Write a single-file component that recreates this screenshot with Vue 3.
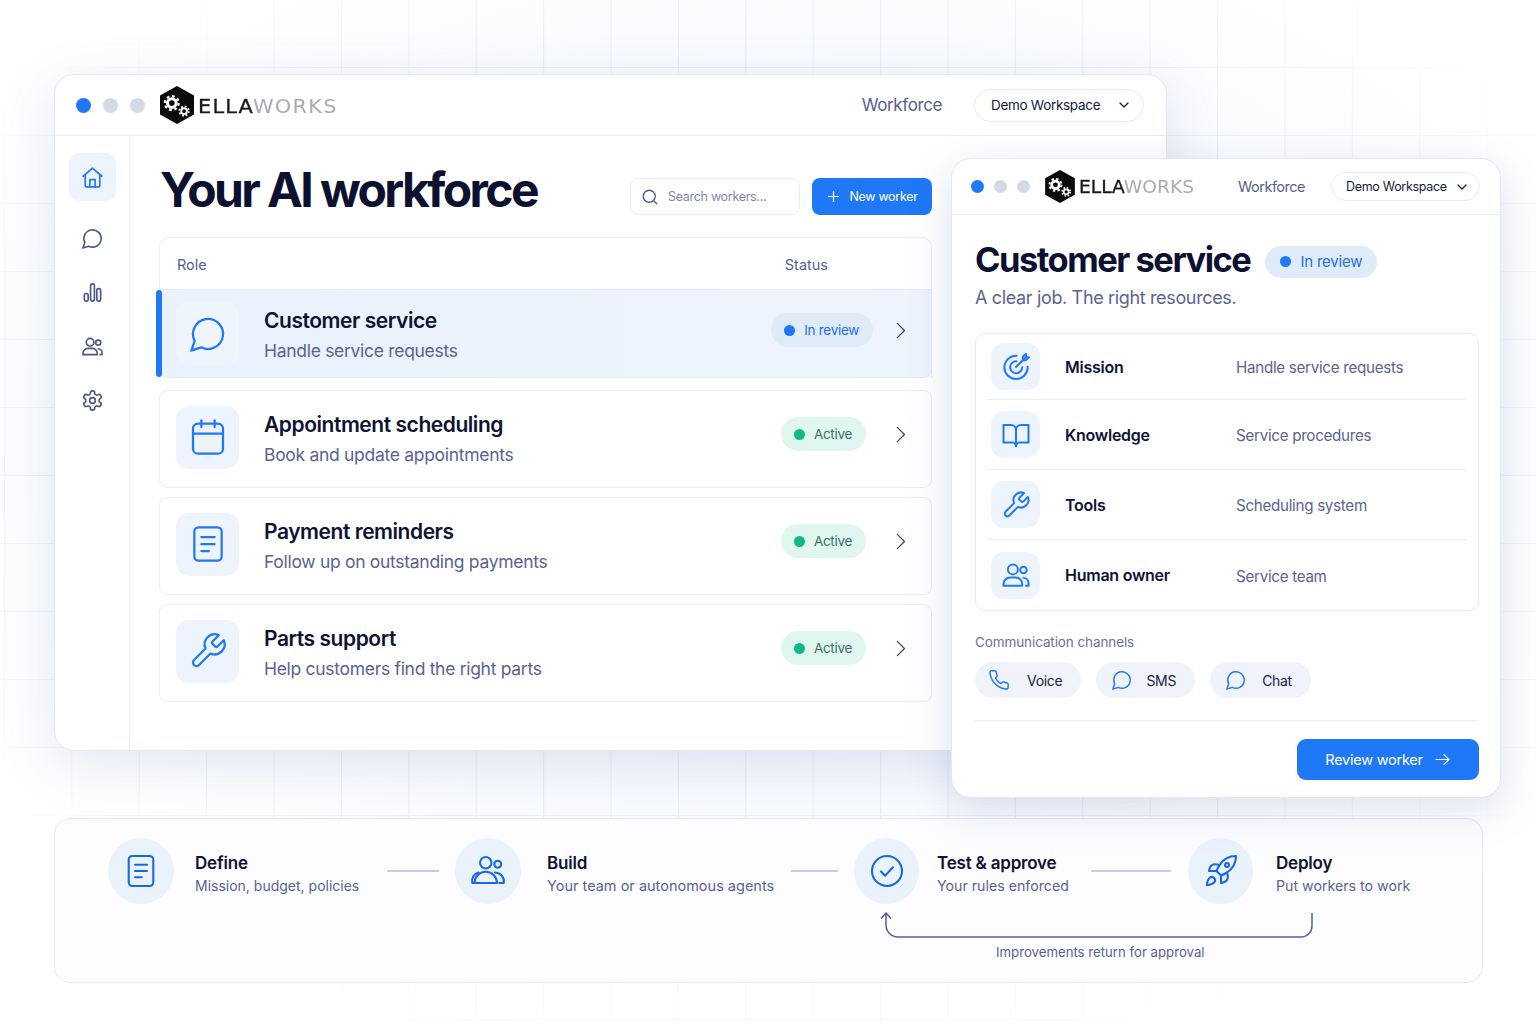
<script setup>
const icons = {
  home: '<path d="M3 10.8 12 3l9 7.800"/><path d="M5 9.200V20a1 1 0 0 0 1 1h12a1 1 0 0 0 1-1V9.200"/><path d="M9.500 21v-7h5v7"/>',
  chat: '<path d="M7.900 20A9 9 0 1 0 4 16.100L2 22Z"/>',
  bars: '<rect x="3.500" y="13" width="4" height="8" rx="1.700"/><rect x="10" y="3" width="4" height="18" rx="1.700"/><rect x="16.500" y="8" width="4" height="13" rx="1.700"/>',
  users: '<circle cx="9.500" cy="7.500" r="4"/><circle cx="18" cy="8" r="2.600"/><path d="M2 20.500v-1.200A5.300 5.300 0 0 1 7.300 14h4.400a5.300 5.300 0 0 1 5.300 5.300v1.200z"/><path d="M18 14.300a4.200 4.200 0 0 1 4 4.200v2h-2"/>',
  build: '<circle cx="10.500" cy="6.500" r="3.800"/><circle cx="18.500" cy="7.500" r="2.300"/><path d="M3 20a7.500 7.500 0 0 1 15 0z"/><path d="M16.500 13a6 6 0 0 1 6 7h-3"/><path d="M5.500 13a6 6 0 0 0-4 7h2"/>',
  gear: '<path d="M12.220 2h-.44a2 2 0 0 0-2 2v.18a2 2 0 0 1-1 1.730l-.43.25a2 2 0 0 1-2 0l-.15-.08a2 2 0 0 0-2.730.73l-.22.38a2 2 0 0 0 .73 2.730l.15.1a2 2 0 0 1 1 1.720v.51a2 2 0 0 1-1 1.740l-.15.09a2 2 0 0 0-.73 2.730l.22.38a2 2 0 0 0 2.730.73l.15-.08a2 2 0 0 1 2 0l.43.25a2 2 0 0 1 1 1.730V20a2 2 0 0 0 2 2h.44a2 2 0 0 0 2-2v-.18a2 2 0 0 1 1-1.730l.43-.25a2 2 0 0 1 2 0l.15.08a2 2 0 0 0 2.730-.73l.22-.39a2 2 0 0 0-.73-2.730l-.15-.08a2 2 0 0 1-1-1.740v-.5a2 2 0 0 1 1-1.740l.15-.09a2 2 0 0 0 .73-2.730l-.22-.38a2 2 0 0 0-2.730-.73l-.15.08a2 2 0 0 1-2 0l-.43-.25a2 2 0 0 1-1-1.730V4a2 2 0 0 0-2-2z"/><circle cx="12" cy="12" r="3"/>',
  calendar: '<path d="M8 2v4"/><path d="M16 2v4"/><rect x="3" y="4" width="18" height="18" rx="3"/><path d="M3 10h18"/>',
  doc: '<rect x="3.800" y="2" width="16.400" height="20" rx="2.500"/><path d="M8 7.800h8"/><path d="M8 12h8"/><path d="M8 16.200h4.500"/>',
  wrench: '<path d="M14.700 6.300a1 1 0 0 0 0 1.400l1.600 1.600a1 1 0 0 0 1.400 0l3.770-3.770a6 6 0 0 1-7.940 7.940l-6.910 6.910a2.120 2.120 0 0 1-3-3l6.910-6.910a6 6 0 0 1 7.940-7.940l-3.760 3.760z"/>',
  target: '<path d="M12.500 3a9.300 9.300 0 1 0 8.800 8.800"/><path d="M12.300 7.400a4.800 4.800 0 1 0 4.600 4.800"/><path d="M12 12l8-8"/><path d="M17.500 6.500V3.600L20 1.500v2.600h2.500L20 6.500z"/>',
  book: '<path d="M2 4h6a4 4 0 0 1 4 4v13a3 3 0 0 0-3-3H2z"/><path d="M22 4h-6a4 4 0 0 0-4 4v13a3 3 0 0 1 3-3h7z"/>',
  phone: '<path d="M22 16.920v3a2 2 0 0 1-2.180 2 19.790 19.790 0 0 1-8.630-3.070 19.500 19.500 0 0 1-6-6 19.790 19.790 0 0 1-3.070-8.670A2 2 0 0 1 4.110 2h3a2 2 0 0 1 2 1.720 12.840 12.840 0 0 0 .7 2.810 2 2 0 0 1-.45 2.110L8.090 9.910a16 16 0 0 0 6 6l1.270-1.270a2 2 0 0 1 2.110-.45 12.840 12.840 0 0 0 2.810.7A2 2 0 0 1 22 16.920z"/>',
  check: '<circle cx="12" cy="12" r="10"/><path d="m8 12.300 2.800 2.800 5.200-5.600"/>',
  rocket: '<path d="M4.500 16.500c-1.500 1.260-2 5-2 5s3.740-.5 5-2c.71-.84.7-2.130-.09-2.910a2.180 2.180 0 0 0-2.910-.09z"/><path d="m12 15-3-3a22 22 0 0 1 2-3.950A12.880 12.880 0 0 1 22 2c0 2.720-.78 7.500-6 11a22.350 22.350 0 0 1-4 2z"/><path d="M9 12H4s.55-3.030 2-4c1.620-1.080 5 0 5 0"/><path d="M12 15v5s3.030-.55 4-2c1.080-1.620 0-5 0-5"/><circle cx="16" cy="8" r="1.300"/>',
  search: '<circle cx="11" cy="11" r="8"/><path d="m21 21-4.300-4.300"/>',
  plus: '<path d="M12 4v16"/><path d="M4 12h16"/>',
  right: '<path d="m8 3 9 9-9 9"/>',
  down: '<path d="m6 9 6 6 6-6"/>',
  arrow: '<path d="M3 12h18"/><path d="m14 5 7 7-7 7"/>'
}
const nav = ['home', 'chat', 'bars', 'users', 'gear']
const workers = [
  { icon: 'calendar', title: 'Appointment scheduling', sub: 'Book and update appointments' },
  { icon: 'doc', title: 'Payment reminders', sub: 'Follow up on outstanding payments' },
  { icon: 'wrench', title: 'Parts support', sub: 'Help customers find the right parts' }
]
const facts = [
  { icon: 'target', label: 'Mission', value: 'Handle service requests' },
  { icon: 'book', label: 'Knowledge', value: 'Service procedures' },
  { icon: 'wrench', label: 'Tools', value: 'Scheduling system' },
  { icon: 'users', label: 'Human owner', value: 'Service team' }
]
const channels = [
  { icon: 'phone', label: 'Voice' },
  { icon: 'chat', label: 'SMS' },
  { icon: 'chat', label: 'Chat' }
]
</script>

<template>
  <div class="page">
    <section class="window main">
      <header class="bar">
        <div class="dots"><i class="blue"></i><i></i><i></i></div>
        <div class="logo">
          <svg class="hex" viewBox="0 0 36 40">
            <polygon points="18,0 36,10 36,30 18,40 0,30 0,10" fill="#0b0b0d" />
            <circle cx="12.500" cy="18" r="4.600" fill="none" stroke="#fff" stroke-width="3.200" />
            <circle cx="12.500" cy="18" r="7.300" fill="none" stroke="#fff" stroke-width="2.400" stroke-dasharray="2.900 2.830" />
            <circle cx="25.500" cy="26.500" r="3" fill="none" stroke="#fff" stroke-width="2" />
            <circle cx="25.500" cy="26.500" r="5" fill="none" stroke="#fff" stroke-width="1.900" stroke-dasharray="2 1.930" />
          </svg>
          <span class="word"><b>ELLA</b><em>WORKS</em></span>
        </div>
        <span class="crumb">Workforce</span>
        <button class="select">Demo Workspace <svg class="ic chev" viewBox="0 0 24 24" v-html="icons.down"></svg></button>
      </header>
      <div class="main-body">
        <nav class="side">
          <span v-for="(n, i) in nav" :key="n" class="nav-item" :class="{ on: i === 0 }">
            <svg class="ic" viewBox="0 0 24 24" v-html="icons[n]"></svg>
          </span>
        </nav>
        <div class="content">
          <div class="head">
            <h1>Your AI workforce</h1>
            <label class="search"><svg class="ic" viewBox="0 0 24 24" v-html="icons.search"></svg>Search workers...</label>
            <button class="new"><svg class="ic" viewBox="0 0 24 24" v-html="icons.plus"></svg>New worker</button>
          </div>
          <div class="table">
            <div class="thead"><span>Role</span><span>Status</span></div>
            <div class="row selected">
              <span class="tile"><svg class="ic" viewBox="0 0 24 24" v-html="icons.chat"></svg></span>
              <div class="row-text"><h3>Customer service</h3><p>Handle service requests</p></div>
              <span class="pill review"><i></i>In review</span>
              <svg class="ic go" viewBox="0 0 24 24" v-html="icons.right"></svg>
            </div>
          </div>
          <div class="rows">
            <div v-for="w in workers" :key="w.title" class="row">
              <span class="tile"><svg class="ic" viewBox="0 0 24 24" v-html="icons[w.icon]"></svg></span>
              <div class="row-text"><h3>{{ w.title }}</h3><p>{{ w.sub }}</p></div>
              <span class="pill active"><i></i>Active</span>
              <svg class="ic go" viewBox="0 0 24 24" v-html="icons.right"></svg>
            </div>
          </div>
        </div>
      </div>
    </section>

    <section class="window detail">
      <header class="bar small">
        <div class="dots"><i class="blue"></i><i></i><i></i></div>
        <div class="logo">
          <svg class="hex" viewBox="0 0 36 40">
            <polygon points="18,0 36,10 36,30 18,40 0,30 0,10" fill="#0b0b0d" />
            <circle cx="12.500" cy="18" r="4.600" fill="none" stroke="#fff" stroke-width="3.200" />
            <circle cx="12.500" cy="18" r="7.300" fill="none" stroke="#fff" stroke-width="2.400" stroke-dasharray="2.900 2.830" />
            <circle cx="25.500" cy="26.500" r="3" fill="none" stroke="#fff" stroke-width="2" />
            <circle cx="25.500" cy="26.500" r="5" fill="none" stroke="#fff" stroke-width="1.900" stroke-dasharray="2 1.930" />
          </svg>
          <span class="word"><b>ELLA</b><em>WORKS</em></span>
        </div>
        <span class="crumb">Workforce</span>
        <button class="select">Demo Workspace <svg class="ic chev" viewBox="0 0 24 24" v-html="icons.down"></svg></button>
      </header>
      <div class="detail-body">
        <div class="detail-title"><h2>Customer service</h2><span class="pill review big"><i></i>In review</span></div>
        <p class="lead">A clear job. The right resources.</p>
        <div class="facts">
          <div v-for="f in facts" :key="f.label" class="fact">
            <span class="tile small"><svg class="ic" viewBox="0 0 24 24" v-html="icons[f.icon]"></svg></span>
            <strong>{{ f.label }}</strong>
            <span class="value">{{ f.value }}</span>
          </div>
        </div>
        <h4>Communication channels</h4>
        <div class="chips">
          <span v-for="c in channels" :key="c.label" class="chip"><svg class="ic" viewBox="0 0 24 24" v-html="icons[c.icon]"></svg>{{ c.label }}</span>
        </div>
        <div class="foot">
          <button class="review-btn">Review worker <svg class="ic" viewBox="0 0 24 24" v-html="icons.arrow"></svg></button>
        </div>
      </div>
    </section>

    <section class="flow">
      <div class="step s1">
        <span class="disc"><svg class="ic" viewBox="0 0 24 24" v-html="icons.doc"></svg></span>
        <div><h5>Define</h5><p>Mission, budget, policies</p></div>
      </div>
      <span class="line l1"></span>
      <div class="step s2">
        <span class="disc"><svg class="ic" viewBox="0 0 24 24" v-html="icons.build"></svg></span>
        <div><h5>Build</h5><p>Your team or autonomous agents</p></div>
      </div>
      <span class="line l2"></span>
      <div class="step s3">
        <span class="disc"><svg class="ic" viewBox="0 0 24 24" v-html="icons.check"></svg></span>
        <div><h5>Test &amp; approve</h5><p>Your rules enforced</p></div>
      </div>
      <span class="line l3"></span>
      <div class="step s4">
        <span class="disc"><svg class="ic" viewBox="0 0 24 24" v-html="icons.rocket"></svg></span>
        <div><h5>Deploy</h5><p>Put workers to work</p></div>
      </div>
      <svg class="loop" viewBox="0 0 440 34" fill="none">
        <path d="M432 1v13a11 11 0 0 1-11 11H18A12 12 0 0 1 6 13V1" stroke="#56608f" stroke-width="1.500" />
        <path d="M1 6.500 6 1l5 5.500" stroke="#56608f" stroke-width="1.500" />
      </svg>
      <span class="loop-label">Improvements return for approval</span>
    </section>
  </div>
</template>

<style>
html, body { margin: 0; background: #fff; }
</style>

<style scoped>
* { box-sizing: border-box; }
.page {
  position: relative;
  width: 1536px;
  height: 1024px;
  overflow: hidden;
  padding: 74px 0 0 54px;
  font-family: Inter, "Noto Sans", sans-serif;
  color: #0d1333;
  background: radial-gradient(ellipse 1000px 640px at 50% 42%, rgba(222, 232, 250, .6), rgba(255, 255, 255, 0) 85%), #fff;
}
.page::before {
  content: "";
  position: absolute;
  inset: 0;
  background:
    linear-gradient(#e8edf7 1px, transparent 1px) 0 67px / 100% 68px,
    linear-gradient(90deg, #e8edf7 1px, transparent 1px) 4px 0 / 67.400px 100%;
  -webkit-mask-image: radial-gradient(ellipse 950px 640px at 50% 45%, #000 65%, transparent 100%);
  mask-image: radial-gradient(ellipse 950px 640px at 50% 45%, #000 65%, transparent 100%);
}
h1, h2, h3, h4, h5, p { margin: 0; }
button { font-family: inherit; border: 0; }
.ic { fill: none; stroke: currentColor; stroke-width: 1.900; stroke-linecap: round; stroke-linejoin: round; display: block; flex: none; }

.window {
  position: relative;
  background: #fff;
  border: 1px solid #e3e8f3;
  border-radius: 20px;
  box-shadow: 0 14px 56px rgba(72, 104, 170, .16);
}
.main { width: 1113px; height: 677px; overflow: clip; }
.detail { position: absolute; left: 951px; top: 158px; width: 550px; height: 640px; z-index: 2; box-shadow: 0 12px 44px rgba(68, 96, 160, .18); }

.bar { height: 61px; display: flex; align-items: center; padding: 0 22px 0 21px; border-bottom: 1px solid #e9edf6; }
.dots { display: flex; gap: 12px; width: 84px; flex: none; }
.dots i { width: 15px; height: 15px; border-radius: 50%; background: #d3dae6; }
.dots i.blue { background: #1f78f5; }
.logo { display: flex; align-items: center; gap: 4px; }
.hex { width: 34px; height: 38px; flex: none; }
.word { display: inline-block; white-space: nowrap; font-family: "DejaVu Sans", sans-serif; font-size: 19px; letter-spacing: 1.100px; line-height: 1; margin-top: 2px; transform: scaleX(1.100); transform-origin: left center; }
.word b { font-weight: 400; color: #17181c; -webkit-text-stroke: .3px #17181c; }
.word em { font-style: normal; color: #a8abb2; }
.crumb { margin-left: auto; font-size: 17px; letter-spacing: -.4px; color: #56608f; }
.select {
  margin-left: 32px; width: 170px; height: 33px; border: 1px solid #e6ebf5; border-radius: 17px; background: #fff;
  display: flex; align-items: center; justify-content: space-between; padding: 0 11px 0 16px;
  font-size: 13.500px; letter-spacing: -.3px; color: #141a3b; white-space: nowrap;
}
.chev { width: 16px; height: 16px; }

.bar.small { height: 56px; padding: 0 20px 0 19px; }
.small .dots { gap: 10px; width: 74px; }
.small .dots i { width: 13px; height: 13px; }
.small .hex { width: 30px; height: 33px; }
.small .word { font-size: 17px; letter-spacing: 0; }
.small .crumb { font-size: 14.500px; letter-spacing: -.5px; }
.small .select { margin-left: 26px; width: 149px; height: 29px; font-size: 12.500px; padding: 0 9px 0 14px; }

.main-body { display: flex; height: 614px; }
.side { width: 75px; border-right: 1px solid #e9edf6; padding: 17px 0 0 1px; display: flex; flex-direction: column; align-items: center; color: #4d5687; flex: none; }
.nav-item { width: 47px; height: 48px; display: flex; align-items: center; justify-content: center; margin-bottom: 6px; border-radius: 10px; }
.nav-item:nth-child(2) { margin-top: 7px; }
.nav-item .ic { width: 23px; height: 23px; stroke-width: 1.700; }
.nav-item.on .ic { width: 25px; height: 25px; stroke-width: 1.600; }
.nav-item.on { background: #edf4fd; color: #1f78f5; }
.content { padding: 0 0 0 29px; width: 802px; }
.head { display: flex; align-items: center; height: 101px; padding-top: 8px; }
h1 { font-size: 48px; font-weight: 700; letter-spacing: -2.600px; color: #0c1130; line-height: 1; margin: 0 auto 2px 1px; }
.search {
  width: 170px; height: 37px; border: 1px solid #e6ebf5; border-radius: 8px; display: flex; align-items: center; gap: 9px; padding-left: 10px;
  font-size: 12.500px; letter-spacing: -.3px; color: #8188aa; background: #fff; margin-top: 12px;
}
.search .ic { width: 18px; height: 18px; stroke-width: 1.700; color: #4d5687; }
.new {
  width: 120px; height: 37px; margin: 12px 0 0 12px; border-radius: 8px; background: #1f78f5; color: #fff; font-size: 12.500px; letter-spacing: -.3px;
  display: flex; align-items: center; justify-content: center; gap: 8px;
}
.new .ic { width: 15px; height: 15px; }

.table { border: 1px solid #e9edf6; border-bottom: 0; border-radius: 10px 10px 0 0; }
.thead { height: 51px; display: flex; align-items: center; padding: 2px 0 0 17px; font-size: 14.500px; color: #56608f; }
.thead span:last-child { margin-left: 578px; }
.row { display: flex; align-items: center; height: 98px; border: 1px solid #e9edf6; border-radius: 8px; padding: 0 21px 0 16px; background: #fff; }
.row.selected { position: relative; height: 89px; margin: 0 -1px; border-color: #e4ecf9; background: linear-gradient(90deg, #e9f2fd, #eef4fd); border-radius: 0 0 8px 8px; }
.row.selected::before { content: ""; position: absolute; left: -4px; top: 0; bottom: 0; width: 6px; background: #1f78f5; border-radius: 4px; }
.rows { display: flex; flex-direction: column; gap: 9px; margin-top: 12px; }
.tile { width: 63px; height: 63px; border-radius: 13px; background: #edf4fd; color: #1f78f5; display: flex; align-items: center; justify-content: center; flex: none; }
.rows .tile { margin-top: -4px; }
.tile .ic { width: 40px; height: 40px; stroke-width: 1.350; }
.row.selected .tile { background: #eff5fd; }
.row-text { margin-left: 25px; flex: 1; }
.row.selected .row-text { padding-top: 2px; }
.row-text h3 { font-size: 21px; font-weight: 600; letter-spacing: -.45px; line-height: 28px; color: #0d1333; }
.row-text p { font-size: 17.500px; letter-spacing: -.3px; line-height: 24px; margin-top: 4px; color: #5a6390; }
.pill { display: inline-flex; align-items: center; height: 34px; border-radius: 17px; font-size: 13.500px; letter-spacing: -.3px; padding: 0 14px 0 13px; gap: 9px; flex: none; white-space: nowrap; }
.row .pill { margin-top: -7px; }
.rows .row .pill { margin-top: -10px; }
.pill i { width: 11px; height: 11px; border-radius: 50%; flex: none; }
.review { background: #e0ebfa; color: #1f6fe0; }
.review i { background: #1f78f5; }
.active { background: #e0f7ef; color: #3c6f6a; }
.active i { background: #10b98a; }
.go { width: 19px; height: 19px; color: #3f487a; margin: -7px 0 0 18px; stroke-width: 1.700; }
.rows .go { margin: -10px 0 0 25px; }

.detail-body { padding: 0 21px 0 23px; }
.detail-title { display: flex; align-items: center; gap: 15px; margin-top: 23px; }
h2 { font-size: 34.500px; font-weight: 700; letter-spacing: -1.500px; line-height: 44px; color: #0c1130; }
.pill.big { font-size: 15px; letter-spacing: -.2px; height: 32px; padding: 0 15px; gap: 9px; border-radius: 16px; margin-top: 3px; }
.lead { font-size: 18px; letter-spacing: -.35px; line-height: 26px; color: #5a6390; margin-top: 3px; }
.facts { margin-top: 22px; border: 1px solid #e6ebf5; border-radius: 10px; padding: 0 12px; height: 278px; }
.fact { display: flex; align-items: center; height: 70px; border-bottom: 1px solid #e9edf6; padding-left: 3px; }
.fact:first-child { height: 66px; }
.fact:last-child { border-bottom: 0; }
.tile.small { width: 49px; height: 47px; border-radius: 13px; }
.tile.small .ic { width: 30px; height: 30px; stroke-width: 1.600; }
.fact strong { width: 171px; margin-left: 25px; font-size: 16px; letter-spacing: -.25px; font-weight: 600; color: #0d1333; }
.value { font-size: 15.200px; letter-spacing: -.3px; color: #5a6390; margin-top: 2px; }
h4 { font-size: 13.500px; letter-spacing: -.1px; font-weight: 400; color: #6a7298; margin-top: 22px; line-height: 18px; }
.chips { display: flex; gap: 15px; margin-top: 11px; }
.chip { height: 36px; border-radius: 18px; background: #f0f4fa; display: flex; align-items: center; gap: 15px; padding: 0 19px 0 15px; font-size: 14px; letter-spacing: -.3px; color: #18204a; }
.chip:first-child { padding-left: 13px; gap: 17px; }
.chip:nth-child(2) { gap: 13px; }
.chip .ic { width: 22px; height: 22px; stroke-width: 1.600; color: #1f78f5; }
.foot { margin-top: 22px; border-top: 1px solid #e9edf6; padding-top: 18px; display: flex; justify-content: flex-end; }
.review-btn { width: 182px; height: 41px; border-radius: 9px; background: #1f78f5; color: #fff; font-size: 14.500px; letter-spacing: -.25px; display: flex; align-items: center; justify-content: center; gap: 11px; }
.review-btn .ic { width: 17px; height: 17px; stroke-width: 1.600; }

.flow {
  position: relative;
  width: 1429px; height: 165px; margin-top: 67px;
  border: 1px solid #e4e9f4; border-radius: 16px; background: #fdfdff;
  display: flex; align-items: flex-start; padding: 19px 0 0 53px;
}
.step { display: flex; align-items: center; gap: 21px; height: 66px; flex: none; white-space: nowrap; }
.disc { width: 66px; height: 66px; border-radius: 50%; background: #eaf2fc; display: flex; align-items: center; justify-content: center; color: #1769e0; flex: none; }
.disc .ic { width: 36px; height: 36px; stroke-width: 1.400; }
.step h5 { font-size: 17px; font-weight: 600; letter-spacing: -.2px; line-height: 24px; color: #0d1333; }
.step p { font-size: 14.200px; line-height: 22px; color: #5a6390; }
.step > div { padding-top: 6px; }
.s1 p { font-size: 14px; }
.s2 p { font-size: 14.500px; }
.s1 > div { width: 163px; }
.s2 > div { width: 226px; }
.s3 > div { width: 131px; }
.s2 { gap: 26px; }
.s3 { gap: 18px; }
.s4 { gap: 23px; }
.s3 .disc, .s4 .disc { width: 65px; }
.line { flex: none; height: 2px; background: #c3cdec; }
.l1 { width: 52px; margin: 32px 16px 0 29px; }
.l2 { width: 47px; margin: 32px 16px 0 18px; }
.l3 { width: 80px; margin: 32px 17px 0 23px; }
.loop { position: absolute; left: 825px; top: 93px; width: 440px; height: 34px; }
.loop-label { position: absolute; left: 941px; top: 125px; font-size: 13.200px; color: #5a6390; white-space: nowrap; }
</style>
